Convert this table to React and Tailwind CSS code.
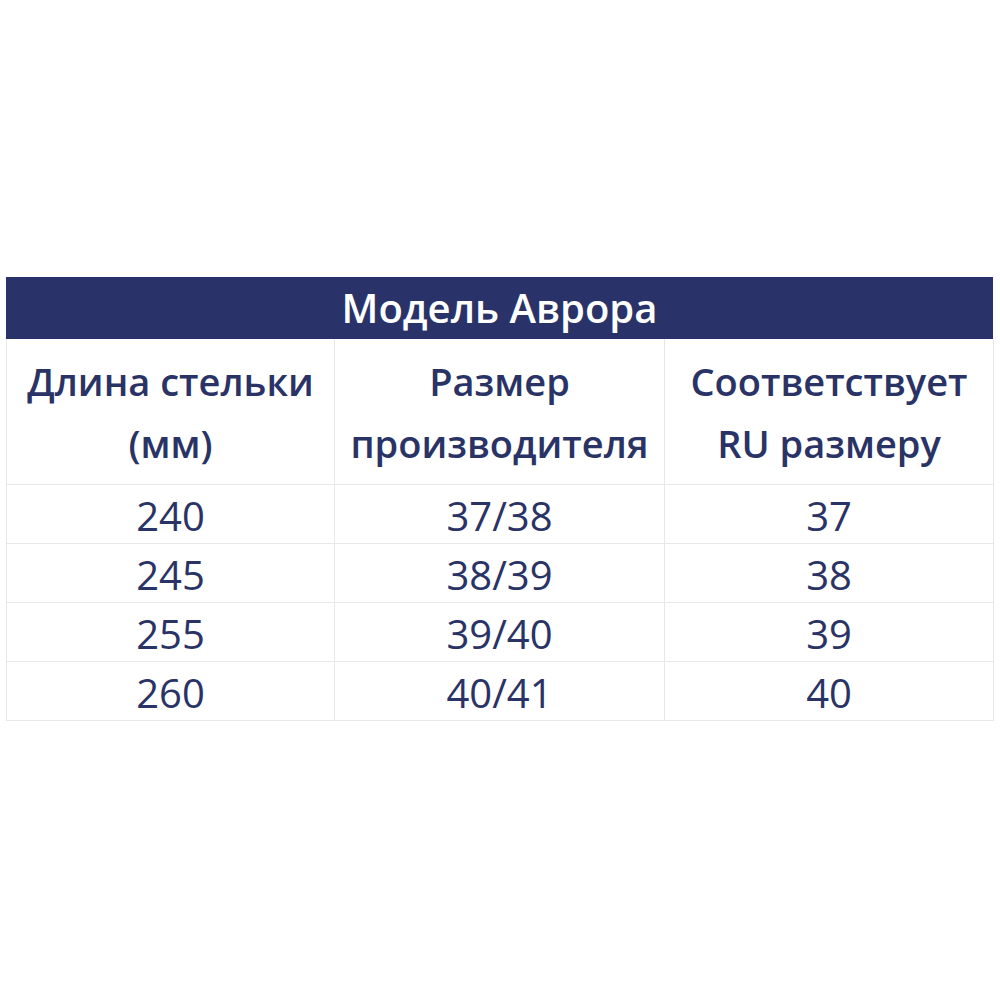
export default function App() {
  const rows = [
    ["240", "37/38", "37"],
    ["245", "38/39", "38"],
    ["255", "39/40", "39"],
    ["260", "40/41", "40"],
  ];
  return (
    <div className="w-[1000px] h-[1000px] bg-white pt-[277px] pl-[6px]" style={{ fontFamily: '"Open Sans", sans-serif' }}>
      <div className="w-[987px]">
        <div className="h-[62px] bg-[#29336a] flex items-center justify-center text-white text-[40px] font-semibold leading-none">
          Модель Аврора
        </div>
        <div className="grid grid-cols-[328px_330px_329px] border-l border-[#e8e8e8] text-[#2a3366]">
          {[
            ["Длина стельки", "(мм)"],
            ["Размер", "производителя"],
            ["Соответствует", "RU размеру"],
          ].map((h, i) => (
            <div key={i} className="h-[146px] border-r border-b border-[#e8e8e8] flex flex-col items-center justify-center text-[38px] font-semibold leading-[62px]">
              <div>{h[0]}</div>
              <div>{h[1]}</div>
            </div>
          ))}
          {rows.map((r, ri) =>
            r.map((c, ci) => (
              <div key={ri + "-" + ci} className="h-[59px] pt-[3px] border-r border-b border-[#e8e8e8] flex items-center justify-center text-[40px] leading-none">
                {c}
              </div>
            ))
          )}
        </div>
      </div>
    </div>
  );
}
